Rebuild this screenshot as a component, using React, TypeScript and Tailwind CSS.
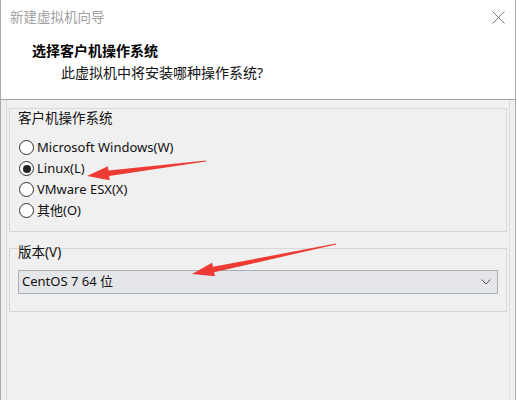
import React from "react";

const FONT = { fontFamily: '"Noto Sans", "Noto Sans CJK SC", sans-serif' };

function Arrow({ t, p }: { t: [number, number]; p: [number, number] }) {
  const dx = p[0] - t[0];
  const dy = p[1] - t[1];
  const len = Math.hypot(dx, dy);
  const d = [dx / len, dy / len];
  const n = [-d[1], d[0]];
  const L = 22;
  const b = [p[0] - d[0] * L, p[1] - d[1] * L];
  const pt = (base: number[], w: number) => `${base[0] + n[0] * w},${base[1] + n[1] * w}`;
  const pts = [
    pt(t, 0.4),
    pt(b, 2.8),
    pt(b, 7),
    `${p[0]},${p[1]}`,
    pt(b, -7),
    pt(b, -2.8),
    pt(t, -0.4),
  ].join(" ");
  return <polygon points={pts} fill="#ee3b34" />;
}

function Radio({ label, checked }: { label: string; checked?: boolean }) {
  return (
    <div className="flex items-center h-[21px]">
      <span className="w-[15px] h-[15px] rounded-full border border-[#333] bg-white flex items-center justify-center ml-[9px]">
        {checked && <span className="w-[8px] h-[8px] rounded-full bg-[#222]" />}
      </span>
      <span className="ml-[3px] text-[13px] text-[#111] leading-none">{label}</span>
    </div>
  );
}

export default function App() {
  return (
    <div style={FONT} className="relative w-[517px] h-[400px] bg-white overflow-hidden">
      <div className="w-[516px] h-[400px] border-l border-r border-[#a9a9a9] flex flex-col bg-[#f0f0f0]">
        <div className="relative h-[100px] bg-white border-b border-[#a0a0a0] shrink-0">
          <div className="absolute left-[9px] top-[7px] text-[13.5px] text-[#a0a0a0]">新建虚拟机向导</div>
          <svg className="absolute left-[491px] top-[11px]" width="13" height="13" viewBox="0 0 13 13">
            <path d="M0.5 0.5 L12.5 12.5 M12.5 0.5 L0.5 12.5" stroke="#7a7a7a" strokeWidth="1" />
          </svg>
          <div className="absolute left-[31px] top-[40px] text-[14px] font-bold text-black">选择客户机操作系统</div>
          <div className="absolute left-[60px] top-[62px] text-[14px] text-[#111]">此虚拟机中将安装哪种操作系统?</div>
        </div>
        <div className="flex-1 mx-[5px] border-l border-r border-[#dedede] px-[2px] pt-[8px]">
          <div className="h-[124px] border border-[#d8d8d8] px-[8px]">
            <div className="text-[13.5px] text-[#111] leading-[20px] mt-[-1px]">客户机操作系统</div>
            <div className="mt-[9px] -ml-[8px]">
              <Radio label="Microsoft Windows(W)" />
              <Radio label="Linux(L)" checked />
              <Radio label="VMware ESX(X)" />
              <Radio label="其他(O)" />
            </div>
          </div>
          <div className="mt-[16px] h-[64px] border border-[#d8d8d8] px-[8px]">
            <div className="text-[13.5px] text-[#111] leading-[20px] mt-[-7px]">版本(V)</div>
            <div className="mt-[8px] w-[480px] h-[24px] border border-[#a8afb7] bg-[#e4e6e9] flex items-center justify-between pl-[3px] pr-[6px]">
              <span className="text-[13px] text-[#111]">CentOS 7 64 位</span>
              <svg width="10" height="6" viewBox="0 0 10 6">
                <path d="M0.5 0.5 L5 5 L9.5 0.5" fill="none" stroke="#555" strokeWidth="1" />
              </svg>
            </div>
          </div>
        </div>
      </div>
      <svg className="absolute left-0 top-0 pointer-events-none" width="517" height="400">
        <Arrow t={[206, 161]} p={[87, 176]} />
        <Arrow t={[336, 244]} p={[192, 274]} />
      </svg>
    </div>
  );
}
